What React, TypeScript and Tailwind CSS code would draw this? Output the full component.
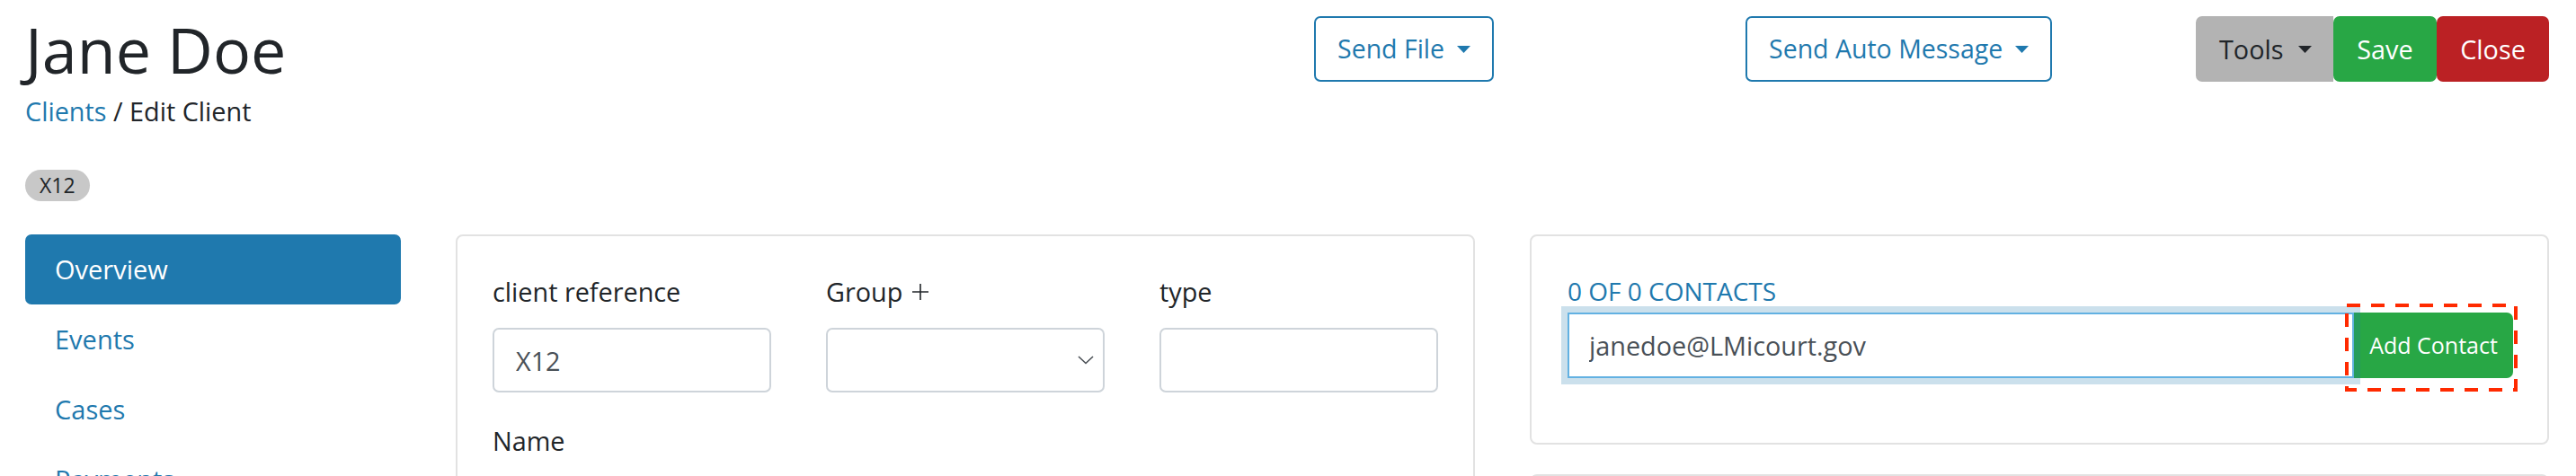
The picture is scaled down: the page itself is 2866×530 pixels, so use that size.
import React from "react";

// ─── Small drawings ───────────────────────────────────────────────────────────

function Caret({ className = "" }: { className?: string }) {
  return (
    <svg width="15" height="8" viewBox="0 0 15 8" className={className} aria-hidden>
      <path d="M0 0 H15 L7.5 8 Z" fill="currentColor" />
    </svg>
  );
}

function Chevron() {
  return (
    <svg width="18" height="10" viewBox="0 0 18 10" aria-hidden>
      <path d="M1 1 L9 8.5 L17 1" fill="none" stroke="#4a4f55" strokeWidth="1.6" />
    </svg>
  );
}

function Plus() {
  return (
    <svg width="20" height="20" viewBox="0 0 20 20" aria-hidden className="ml-[10px]">
      <path d="M10 1 V19 M1 10 H19" stroke="#212529" strokeWidth="1.6" />
    </svg>
  );
}

// highlight box drawn over the Add Contact button
function DashedFrame() {
  return (
    <svg
      className="pointer-events-none absolute -top-[10px] -left-[10px] z-20 overflow-visible"
      width="192"
      height="98"
      aria-hidden
    >
      <rect
        x="2"
        y="2"
        width="188"
        height="94"
        fill="none"
        stroke="#ff2a00"
        strokeWidth="4"
        strokeDasharray="15 12"
      />
    </svg>
  );
}

// ─── Pieces ───────────────────────────────────────────────────────────────────

function OutlineDropdown({ label }: { label: string }) {
  return (
    <button className="flex h-[73px] items-center gap-[14px] rounded-[7px] border-2 border-[#1f79ae] pl-[24px] pr-[24px] text-[28.5px] text-[#1f79ae]">
      <span>{label}</span>
      <Caret />
    </button>
  );
}

function Field({ label, children }: { label: React.ReactNode; children?: React.ReactNode }) {
  return (
    <div className="flex flex-col">
      <label className="mb-[19px] flex items-center text-[28.8px] leading-[43px] text-[#212529]">
        {label}
      </label>
      {children}
    </div>
  );
}

const inputCls =
  "h-[72px] w-full rounded-[7px] border-2 border-[#ced4da] bg-white pl-[24px] text-[28.8px] text-[#495057] outline-none";

const navItems = ["Overview", "Events", "Cases", "Payments", "Notes"];

// ─── Page ─────────────────────────────────────────────────────────────────────

export default function App() {
  return (
    <div
      className="h-[530px] overflow-hidden bg-white text-[#212529]"
      style={{ fontFamily: '"Open Sans", "Noto Sans", sans-serif' }}
    >
      {/* Header */}
      <div className="flex items-start pl-[28px] pr-[30px]">
        <div className="w-[1434px] pt-[13px]">
          <h1 className="text-[70px] leading-[85px] font-normal">Jane Doe</h1>
          <div className="mt-[4px] text-[28.8px] leading-[43px]">
            <a className="text-[#1f79ae]">Clients</a> / Edit Client
          </div>
          <span className="mt-[44px] inline-flex h-[35px] items-center rounded-full bg-[#c8c8c8] px-[16px] text-[23px] text-[#212529]">
            X12
          </span>
        </div>

        <div className="mt-[18px] w-[480px]">
          <OutlineDropdown label="Send File" />
        </div>
        <div className="mt-[18px]">
          <OutlineDropdown label="Send Auto Message" />
        </div>

        <div className="mt-[18px] ml-auto flex h-[73px] text-[28.8px]">
          <button className="flex w-[153px] items-center gap-[16px] rounded-l-[7px] bg-[#b3b3b3] pl-[26px] text-[#212529]">
            <span>Tools</span>
            <Caret />
          </button>
          <button className="w-[115px] rounded-[7px] bg-[#28a745] text-white">Save</button>
          <button className="w-[125px] rounded-[7px] bg-[#bb2124] text-white">Close</button>
        </div>
      </div>

      {/* Body */}
      <div className="mt-[37px] grid grid-cols-[418px_1fr_1fr] gap-x-[61px] pl-[28px] pr-[30px]">
        {/* Side nav */}
        <nav className="flex flex-col">
          {navItems.map((item, i) => (
            <a
              key={item}
              className={
                i === 0
                  ? "flex h-[78px] items-center rounded-[7px] bg-[#1f79ae] pl-[33px] text-[29px] text-white"
                  : "flex h-[78px] items-center pl-[33px] text-[29px] text-[#1f79ae]"
              }
            >
              {item}
            </a>
          ))}
        </nav>

        {/* Client details */}
        <div className="h-[400px] rounded-[8px] border-2 border-[#e2e2e2] px-[39px] pt-[40px]">
          <div className="grid grid-cols-3 gap-x-[61px]">
            <Field label="client reference">
              <input className={inputCls} defaultValue="X12" />
            </Field>
            <Field
              label={
                <>
                  Group
                  <Plus />
                </>
              }
            >
              <div className="flex h-[72px] w-full items-center justify-end rounded-[7px] border-2 border-[#ced4da] pr-[10px]">
                <Chevron />
              </div>
            </Field>
            <Field label="type">
              <input className={inputCls} />
            </Field>
          </div>
          <div className="mt-[32px]">
            <Field label="Name">
              <input className={inputCls} />
            </Field>
          </div>
        </div>

        {/* Contacts */}
        <div className="flex flex-col gap-[33px]">
          <div className="rounded-[8px] border-2 border-[#e2e2e2] pt-[40px] pb-[72px] pl-[40px] pr-[38px]">
            <div className="text-[28px] leading-[43px] text-[#1f79ae]">0 OF 0 CONTACTS</div>
            <div className="mt-[2px] flex">
              <input
                className="relative z-10 h-[73px] flex-1 border-2 border-[#62b1e2] bg-transparent pl-[22px] text-[28.8px] text-[#495057] shadow-[0_0_0_7px_rgba(31,121,174,0.23)] outline-none"
                defaultValue="janedoe@LMicourt.gov"
              />
              <div className="relative">
                <button className="h-[73px] w-[177px] rounded-r-[7px] bg-[#28a745] text-[25px] text-white">
                  Add Contact
                </button>
                <DashedFrame />
              </div>
            </div>
          </div>
          <div className="h-[200px] rounded-[8px] border-2 border-[#e2e2e2]" />
        </div>
      </div>
    </div>
  );
}
